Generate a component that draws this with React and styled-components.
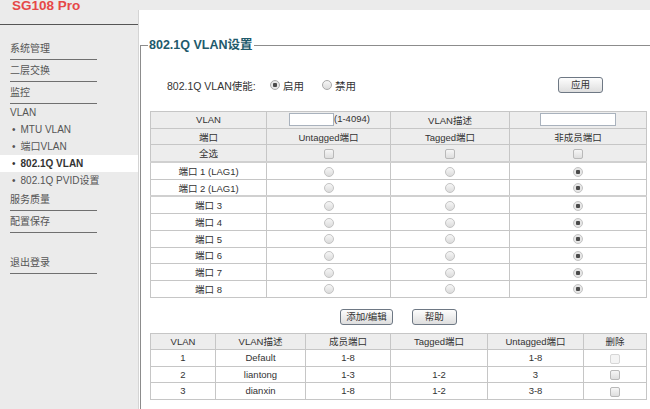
import React from "react";
import styled, { createGlobalStyle } from "styled-components";

const GlobalStyle = createGlobalStyle`
  html, body {
    margin: 0;
    padding: 0;
  }
  body {
    background: #ebebeb;
    font-family: "Liberation Sans", "Noto Sans CJK SC", Arial, sans-serif;
    overflow: hidden;
  }
`;

const ports = [
  "端口 1 (LAG1)",
  "端口 2 (LAG1)",
  "端口 3",
  "端口 4",
  "端口 5",
  "端口 6",
  "端口 7",
  "端口 8",
];

const vlans = [
  { id: 1, name: "Default", members: "1-8", tagged: "", untagged: "1-8", locked: true },
  { id: 2, name: "liantong", members: "1-3", tagged: "1-2", untagged: "3" },
  { id: 3, name: "dianxin", members: "1-8", tagged: "1-2", untagged: "3-8" },
];

function App() {
  return (
    <>
      <GlobalStyle />
      <Page>
        <Sidebar>
          <Brand>SG108 Pro</Brand>
          <MenuItem $gap={13}>系统管理</MenuItem>
          <MenuItem>二层交换</MenuItem>
          <MenuItem>监控</MenuItem>
          <MenuLabel>VLAN</MenuLabel>
          <SubItem>MTU VLAN</SubItem>
          <SubItem>端口VLAN</SubItem>
          <SubItem $active>802.1Q VLAN</SubItem>
          <SubItem>802.1Q PVID设置</SubItem>
          <MenuItem>服务质量</MenuItem>
          <MenuItem>配置保存</MenuItem>
          <MenuItem $gap={19}>退出登录</MenuItem>
        </Sidebar>

        <Main>
          <Fieldset>
            <Legend>802.1Q VLAN设置</Legend>

            <EnableRow>
              <EnableLabel>802.1Q VLAN使能:</EnableLabel>
              <RadioOption>
                <Radio $checked $strong />
                启用
              </RadioOption>
              <RadioOption>
                <Radio $strong />
                禁用
              </RadioOption>
              <Button $push>应用</Button>
            </EnableRow>

            <Grid>
              <colgroup>
                <col style={{ width: 116 }} />
                <col style={{ width: 124 }} />
                <col style={{ width: 119 }} />
                <col style={{ width: 137 }} />
              </colgroup>
              <tbody>
                <HeadRow>
                  <td>VLAN</td>
                  <IdCell>
                    <TextInput $w={45} />
                    (1-4094)
                  </IdCell>
                  <td>VLAN描述</td>
                  <td>
                    <TextInput $w={76} />
                  </td>
                </HeadRow>
                <HeadRow>
                  <td>端口</td>
                  <td>Untagged端口</td>
                  <td>Tagged端口</td>
                  <td>非成员端口</td>
                </HeadRow>
                <HeadRow>
                  <td>全选</td>
                  <td>
                    <CheckBox />
                  </td>
                  <td>
                    <CheckBox />
                  </td>
                  <td>
                    <CheckBox />
                  </td>
                </HeadRow>
                {ports.map((p, i) => (
                  <BodyRow key={p} $split={i === 0 || i === 2}>
                    <td>{p}</td>
                    <td>
                      <Radio />
                    </td>
                    <td>
                      <Radio />
                    </td>
                    <td>
                      <Radio $checked />
                    </td>
                  </BodyRow>
                ))}
              </tbody>
            </Grid>

            <ButtonRow>
              <Button>添加/编辑</Button>
              <Button>帮助</Button>
            </ButtonRow>

            <Grid $compact>
              <colgroup>
                <col style={{ width: 65 }} />
                <col style={{ width: 90 }} />
                <col style={{ width: 85 }} />
                <col style={{ width: 97 }} />
                <col style={{ width: 96 }} />
                <col style={{ width: 63 }} />
              </colgroup>
              <tbody>
                <HeadRow>
                  <td>VLAN</td>
                  <td>VLAN描述</td>
                  <td>成员端口</td>
                  <td>Tagged端口</td>
                  <td>Untagged端口</td>
                  <td>删除</td>
                </HeadRow>
                {vlans.map((v) => (
                  <BodyRow key={v.id}>
                    <td>{v.id}</td>
                    <td>{v.name}</td>
                    <td>{v.members}</td>
                    <td>{v.tagged}</td>
                    <td>{v.untagged}</td>
                    <td>
                      <CheckBox $faint={v.locked} />
                    </td>
                  </BodyRow>
                ))}
              </tbody>
            </Grid>
          </Fieldset>
        </Main>
      </Page>
    </>
  );
}

const Page = styled.div`
  display: flex;
  width: 660px;
  height: 409px;
`;

const Sidebar = styled.nav`
  width: 138px;
  flex-shrink: 0;
  display: flex;
  flex-direction: column;
  font-size: 10px;
  color: #555;
`;

const Brand = styled.div`
  height: 24px;
  padding-left: 12px;
  border-bottom: 1px solid #555;
  color: #e64848;
  font-size: 13.5px;
  font-weight: bold;
  line-height: 11px;
`;

const MenuItem = styled.div`
  width: 87px;
  height: 21px;
  margin: ${(p) => p.$gap || 0}px 0 0 10px;
  line-height: 21px;
  border-bottom: 1px solid #6f6f6f;
`;

const MenuLabel = styled.div`
  height: 17px;
  padding-left: 10px;
  line-height: 17px;
`;

const SubItem = styled.div`
  height: 17px;
  padding-left: 12px;
  line-height: 17px;
  background: ${(p) => (p.$active ? "#fff" : "transparent")};
  color: ${(p) => (p.$active ? "#333" : "#555")};
  font-weight: ${(p) => (p.$active ? "bold" : "normal")};

  &::before {
    content: "•";
    margin-right: 5px;
    font-weight: normal;
  }
`;

const Main = styled.main`
  flex: 1;
  margin-top: 10px;
  padding-left: 1px;
  background: #fff;
  border-left: 1px solid #d4d4d4;
`;

const Fieldset = styled.fieldset`
  box-sizing: border-box;
  width: 516px;
  margin: 28px 0 0 0;
  padding: 0 10px 40px 9px;
  border: 1px solid #8c8c8c;
`;

const Legend = styled.legend`
  margin-left: -2px;
  padding: 0 1px;
  color: #215a6b;
  font-size: 12.5px;
  font-weight: bold;
  line-height: 15px;
`;

const EnableRow = styled.div`
  display: flex;
  align-items: center;
  height: 16px;
  margin-top: 24px;
  padding: 0 44px 0 17px;
  font-size: 10.5px;
  color: #333;
`;

const EnableLabel = styled.span`
  width: 103px;
`;

const RadioOption = styled.label`
  display: inline-flex;
  align-items: center;
  gap: 3px;
  margin-right: 18px;
`;

const Radio = styled.span`
  display: inline-block;
  box-sizing: border-box;
  width: 10px;
  height: 10px;
  border-radius: 50%;
  border: 1px solid ${(p) => (p.$strong ? "#a9a9a9" : "#c4c4c4")};
  background: ${(p) =>
    p.$checked
      ? "radial-gradient(circle, #4a4a4a 0 2px, #e6e6e6 2.5px)"
      : "linear-gradient(#f6f6f6, #dcdcdc)"};
  vertical-align: middle;
`;

const CheckBox = styled.span`
  display: inline-block;
  box-sizing: border-box;
  width: 10px;
  height: 10px;
  border-radius: 2px;
  border: 1px solid ${(p) => (p.$faint ? "#d6d6d6" : "#b9b9b9")};
  background: ${(p) =>
    p.$faint ? "#f4f4f4" : "linear-gradient(#f6f6f6, #dedede)"};
  vertical-align: middle;
`;

const TextInput = styled.span`
  display: inline-block;
  box-sizing: border-box;
  width: ${(p) => p.$w}px;
  height: 13px;
  background: #fff;
  border: 1px solid #a9b2bd;
  vertical-align: middle;
`;

const Button = styled.button`
  min-width: 45px;
  height: 16px;
  margin-left: ${(p) => (p.$push ? "auto" : "0")};
  padding: 0 5px;
  border: 1px solid #6e7884;
  border-radius: 3px;
  background: linear-gradient(#fdfdfd, #dedede);
  color: #333;
  font-family: inherit;
  font-size: 9.5px;
  line-height: 14px;
`;

const ButtonRow = styled.div`
  display: flex;
  justify-content: center;
  gap: 19px;
  margin-top: 11px;
`;

const Grid = styled.table`
  width: 496px;
  margin-top: ${(p) => (p.$compact ? 8 : 18)}px;
  border-collapse: collapse;
  table-layout: fixed;
  font-size: 9.5px;
  color: #333;

  td {
    height: ${(p) => (p.$compact ? 15.5 : 15.7)}px;
    padding: 0;
    border: 1px solid #c6c6c6;
    text-align: center;
    white-space: nowrap;
  }
`;

const HeadRow = styled.tr`
  background: #ededed;
`;

const BodyRow = styled.tr`
  background: #fff;

  td {
    border-top: ${(p) => (p.$split ? "2px solid #d0d0d0" : "1px solid #c6c6c6")};
  }
`;

const IdCell = styled.td`
  && {
    text-align: left;
    padding-left: 22px;
  }
`;

export default App;
